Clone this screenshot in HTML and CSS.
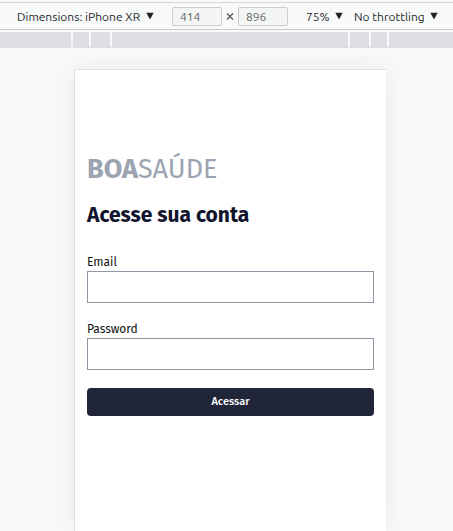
FILE: index.html
```
<!DOCTYPE html>
<html lang="pt-BR">
<head>
<meta charset="utf-8">
<meta name="viewport" content="width=device-width, initial-scale=1">
<title>BoaSaúde</title>
<link rel="stylesheet" href="styles.css">
</head>
<body>
<header class="toolbar">
  <div class="picker picker-device">
    <select aria-label="Device"><option>Dimensions: iPhone XR</option></select>
    <svg class="arrow" viewBox="0 0 8 8" aria-hidden="true"><path d="M0.3 0.8h7.4L4 7.6z"/></svg>
  </div>
  <div class="size">
    <input type="text" value="414" aria-label="Width">
    <svg class="times" viewBox="0 0 8 8" aria-hidden="true"><path d="M1 1.5l6 6M7 1.5l-6 6"/></svg>
    <input type="text" value="896" aria-label="Height">
  </div>
  <div class="picker picker-zoom">
    <select aria-label="Zoom"><option>75%</option></select>
    <svg class="arrow" viewBox="0 0 8 8" aria-hidden="true"><path d="M0.3 0.8h7.4L4 7.6z"/></svg>
  </div>
  <div class="picker">
    <select aria-label="Throttling"><option>No throttling</option></select>
    <svg class="arrow" viewBox="0 0 8 8" aria-hidden="true"><path d="M0.3 0.8h7.4L4 7.6z"/></svg>
  </div>
</header>
<div class="ruler">
  <span class="band band-edge-left"></span>
  <span class="band band-small"></span>
  <span class="band band-medium"></span>
  <span class="band band-center"></span>
  <span class="band band-medium"></span>
  <span class="band band-small"></span>
  <span class="band band-edge-right"></span>
</div>
<div class="stage">
  <main class="device">
    <p class="logo"><strong>BOA</strong>SAÚDE</p>
    <h1>Acesse sua conta</h1>
    <form>
      <div class="field">
        <label for="email">Email</label>
        <input id="email" type="email">
      </div>
      <div class="field">
        <label for="password">Password</label>
        <input id="password" type="password">
      </div>
      <button type="submit">Acessar</button>
    </form>
  </main>
</div>
</body>
</html>
```
FILE: styles.css
```
* {
  box-sizing: border-box;
}

body {
  display: flex;
  flex-direction: column;
  min-height: 100vh;
  margin: 0;
  background: #f8faf9;
  color: #111;
  font-family: "Fira Sans", Roboto, sans-serif;
}

.toolbar {
  display: flex;
  align-items: center;
  height: 28px;
  margin-top: 2px;
  padding-left: 17px;
  border-top: 1px solid #d5d9d8;
  border-bottom: 1px solid #c6cbc9;
  color: #25282b;
  font-family: Ubuntu, "Noto Sans", sans-serif;
  font-size: 12px;
}

.picker {
  display: flex;
  align-items: center;
  gap: 5px;
  white-space: nowrap;
}

.picker select {
  padding: 0;
  border: 0;
  background: none;
  color: inherit;
  font: inherit;
  appearance: none;
}

.arrow {
  width: 8px;
  height: 8px;
  fill: #202326;
}

.picker-device {
  margin-right: 18px;
}

.picker-zoom {
  margin-right: 11px;
}

.size {
  display: flex;
  align-items: center;
  gap: 4px;
  margin-right: 18px;
}

.size input {
  width: 50px;
  height: 19px;
  padding: 0 7px;
  border: 1px solid #cacdcc;
  border-radius: 2px;
  background: #f4f6f5;
  color: #5c6063;
  font: inherit;
}

.times {
  width: 8px;
  height: 8px;
  fill: none;
  stroke: #55595c;
  stroke-width: 1.3;
}

.ruler {
  display: flex;
  gap: 2px;
  height: 16px;
  margin-top: 2px;
  border-bottom: 1px solid #dedfe5;
}

.band {
  background: #dedfe5;
}

.band-edge-left {
  width: 71px;
}

.band-small {
  width: 16px;
}

.band-medium {
  width: 19px;
}

.band-center {
  flex: 1;
}

.band-edge-right {
  width: 64px;
}

.stage {
  display: flex;
  flex: 1;
  padding: 21px 67px 0 74px;
  overflow: hidden;
}

.device {
  flex: 1;
  padding: 81px 12px 0;
  border-top: 1px solid #dfe2e1;
  border-left: 1px solid #dcdfde;
  background: #fff;
  box-shadow: 0 0 24px rgba(0, 0, 0, 0.07);
}

.logo {
  margin: 0;
  color: #9ca3b1;
  font-size: 27px;
  font-weight: 400;
  line-height: 36px;
}

.logo strong {
  font-weight: 700;
}

h1 {
  margin: 12px 0 0;
  color: #11142d;
  font-size: 21px;
  font-weight: 700;
  line-height: 32px;
}

form {
  display: flex;
  flex-direction: column;
  margin-top: 23px;
}

.field {
  display: flex;
  flex-direction: column;
  gap: 1px;
  margin-bottom: 18px;
}

.field label {
  font-size: 12px;
  line-height: 16px;
}

.field input {
  height: 32px;
  padding: 0 8px;
  border: 1px solid #9395a5;
  background: #fff;
  font: inherit;
}

form button {
  height: 28px;
  padding: 0 0 2px;
  border: 0;
  border-radius: 4px;
  background: #202538;
  color: #fff;
  font: inherit;
  font-size: 11px;
  font-weight: 500;
}
```
